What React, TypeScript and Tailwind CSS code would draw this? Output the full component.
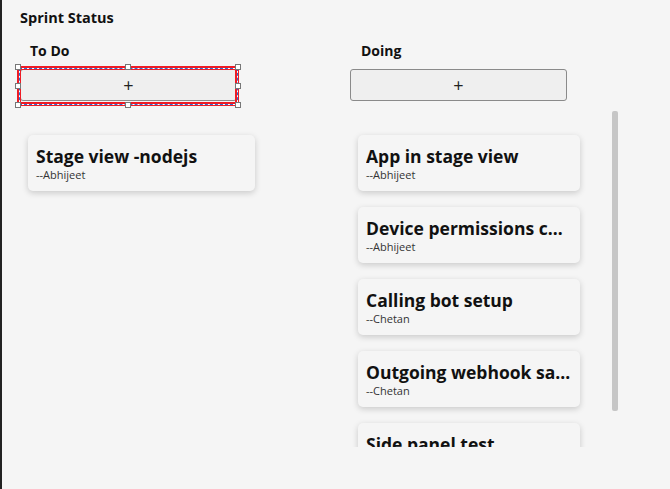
import React from "react";

const font = { fontFamily: '"Open Sans", "Noto Sans", sans-serif' };

function Card({ title, who }: { title: string; who: string }) {
  return (
    <div className="rounded-[5px] bg-[#f5f5f5] pl-[8px] pr-[6px] pt-[9px] pb-[9px] shadow-[0_2px_6px_rgba(0,0,0,0.18)]">
      <div className="truncate text-[17.5px] font-bold leading-[24px] text-[#111]">{title}</div>
      <div className="text-[11px] leading-[14px] text-[#333]">{who}</div>
    </div>
  );
}

function AddButton() {
  return (
    <div className="flex h-[32px] w-[217px] items-center justify-center rounded-[3px] border border-[#8a8a8a] bg-[#efefef] text-[18px] leading-none text-[#222]">
      +
    </div>
  );
}

function Handle({ cls }: { cls: string }) {
  return <div className={`absolute h-[6px] w-[6px] border border-[#777] bg-white ${cls}`} />;
}

export default function App() {
  const doing = [
    ["App in stage view", "--Abhijeet"],
    ["Device permissions check", "--Abhijeet"],
    ["Calling bot setup", "--Chetan"],
    ["Outgoing webhook sample", "--Chetan"],
    ["Side panel test", "--Chetan"],
  ];
  return (
    <div className="flex h-[489px] w-[670px] bg-[#f5f5f5]" style={font}>
      <div className="w-[2px] bg-[#222]" />
      <div className="flex flex-1 flex-col pl-[18px] pt-[8px]">
        <div className="text-[14.5px] font-bold leading-[20px] text-[#111]">Sprint Status</div>
        <div className="mt-[13px] flex">
          {/* To Do column */}
          <div className="flex w-[330px] flex-col">
            <div className="pl-[10px] text-[14px] font-bold leading-[20px] text-[#111]">To Do</div>
            <div className="relative mt-[8px] w-[217px]">
              <AddButton />
              <div className="pointer-events-none absolute -left-[3px] -right-[2px] -top-[3px] -bottom-[5px] border-[4px] border-[#ee1c25]">
                <div className="absolute -inset-[2.5px] border border-white" />
                <div className="absolute -inset-[2.5px] border border-dashed border-[#2a6fd6]" />
              </div>
              <Handle cls="-left-[5px] -top-[5px]" />
              <Handle cls="left-[105px] -top-[5px]" />
              <Handle cls="-right-[4px] -top-[5px]" />
              <Handle cls="-left-[5px] top-[14px]" />
              <Handle cls="-right-[4px] top-[14px]" />
              <Handle cls="-left-[5px] -bottom-[7px]" />
              <Handle cls="left-[105px] -bottom-[7px]" />
              <Handle cls="-right-[4px] -bottom-[7px]" />
            </div>
            <div className="mt-[34px] w-[227px] pl-[8px] box-content">
              <Card title="Stage view -nodejs" who="--Abhijeet" />
            </div>
          </div>
          {/* Doing column */}
          <div className="flex flex-col">
            <div className="pl-[11px] text-[14px] font-bold leading-[20px] text-[#111]">Doing</div>
            <div className="mt-[8px]">
              <AddButton />
            </div>
            <div className="mt-[10px] flex">
              <div className="h-[336px] w-[240px] overflow-hidden pl-[8px] pt-[24px]">
                <div className="flex w-[222px] flex-col gap-[16px]">
                  {doing.map(([t, w]) => (
                    <Card key={t} title={t} who={w} />
                  ))}
                </div>
              </div>
              <div className="ml-[22px] mt-0 h-[300px] w-[6px] rounded-[2px] bg-[#c6c6c6]" />
            </div>
          </div>
        </div>
      </div>
    </div>
  );
}
